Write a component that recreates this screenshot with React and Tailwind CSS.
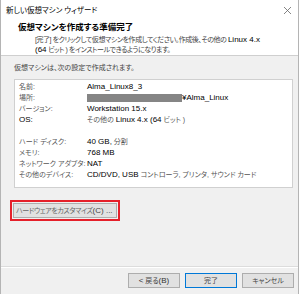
import React from "react";

const font = {
  fontFamily: '"Liberation Sans", "Noto Sans CJK JP", sans-serif',
};

function L({ children, c = "text-black" }) {
  return <span className={"text-[8px] tracking-normal " + c}>{children}</span>;
}

const rows1 = [
  ["名前:", <L>Alma_Linux8_3</L>],
  [
    "場所:",
    <span className="flex items-center">
      <span className="inline-block w-[95px] h-[8px] bg-[#858585]" />
      <L>¥Alma_Linux</L>
    </span>,
  ],
  ["バージョン:", <L>Workstation 15.x</L>],
  [
    <L>OS:</L>,
    <span>
      その他の <L>Linux 4.x (64</L> ビット )
    </span>,
  ],
];

const rows2 = [
  ["ハード ディスク:", <span><L>40 GB,</L> 分割</span>],
  ["メモリ:", <L>768 MB</L>],
  ["ネットワーク アダプタ:", <L>NAT</L>],
  [
    "その他のデバイス:",
    <span>
      <L>CD/DVD, USB</L> コントローラ, プリンタ, サウンド カード
    </span>,
  ],
];

function Row({ label, value }) {
  return (
    <div className="flex h-[11px] items-center whitespace-nowrap">
      <div className="w-[68px] shrink-0 text-[#555]">{label}</div>
      <div className="text-[#555]">{value}</div>
    </div>
  );
}

function Btn({ children, def }) {
  return (
    <div
      className={
        "w-[52px] h-[15px] flex items-center justify-center bg-[#e1e1e1] border whitespace-nowrap " +
        (def ? "border-[#0078d7]" : "border-[#adadad]")
      }
    >
      {children}
    </div>
  );
}

export default function App() {
  return (
    <div
      className="w-[299px] h-[294px] bg-[#f0f0f0] border-l border-r border-[#b4b4b4] flex flex-col text-[7px] leading-[11px] text-black [font-feature-settings:'palt']"
      style={font}
    >
      <div className="h-[20px] bg-white flex items-center justify-between pl-[5px] pr-[6px]">
        <span className="text-[7.5px]">新しい仮想マシン ウィザード</span>
        <svg width="9" height="9" viewBox="0 0 9 9">
          <path d="M1 1 L8 8 M8 1 L1 8" stroke="#666" strokeWidth="0.8" fill="none" />
        </svg>
      </div>
      <div className="h-[36px] bg-white border-b border-[#cfcfcf] pl-[17px] whitespace-nowrap">
        <div className="pt-[2px] font-bold text-[8.5px] leading-[11px]">仮想マシンを作成する準備完了</div>
        <div className="mt-[2px] pl-[17px] leading-[10px] text-[#444] tracking-[-0.45px]">
          <div>
            [完了] をクリックして仮想マシンを作成してください。作成後、その他の <L>Linux 4.x</L>
          </div>
          <div>
            <L>(64</L> ビット ) をインストールできるようになります。
          </div>
        </div>
      </div>
      <div className="flex-1 flex flex-col">
        <div className="pt-[6px] pl-[13px] text-[#444] whitespace-nowrap">仮想マシンは、次の設定で作成されます。</div>
        <div className="mt-[6px] ml-[13px] mr-[5px] bg-white border border-[#d0d0d0] pl-[4px] pt-[1px] pb-[7px]">
          {rows1.map(([l, v], i) => (
            <Row key={i} label={l} value={v} />
          ))}
          <div className="h-[11px]" />
          {rows2.map(([l, v], i) => (
            <Row key={i} label={l} value={v} />
          ))}
        </div>
        <div className="mt-[12px] ml-[9px] w-[110px] h-[21px] border-2 border-[#e5202a] p-[1px]">
          <div className="h-full bg-[#e1e1e1] border border-[#adadad] flex items-center pl-[2px] text-[#666] whitespace-nowrap tracking-[-0.4px]">
            ハードウェアをカスタマイズ<L c="text-[#444]">(C) ...</L>
          </div>
        </div>
        <div className="flex-1" />
        <div className="h-[1px] bg-[#dcdcdc]" />
        <div className="h-[1px] bg-white" />
        <div className="flex justify-end gap-[5px] pr-[4px] pt-[5px] pb-[6px] text-[#444]">
          <Btn>
            <L c="text-[#333]">&lt;</L>&nbsp;戻る<L c="text-[#333]">(B)</L>
          </Btn>
          <Btn def>完了</Btn>
          <Btn>キャンセル</Btn>
        </div>
      </div>
    </div>
  );
}
